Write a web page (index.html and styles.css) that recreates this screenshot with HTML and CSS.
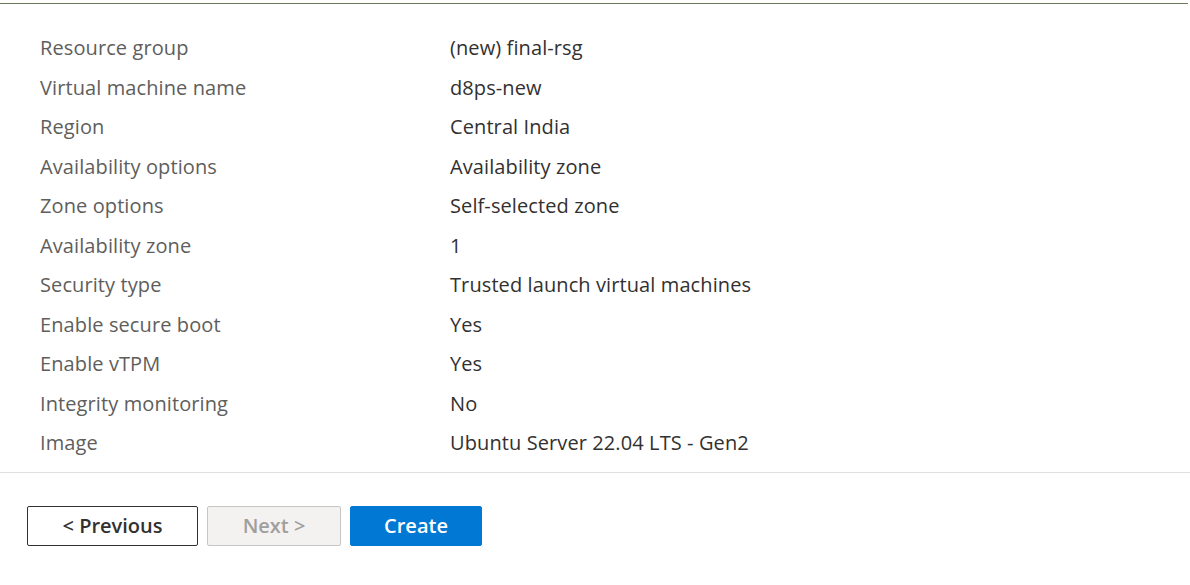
FILE: index.html
```html
<!DOCTYPE html>
<html>
<head>
<meta charset="utf-8">
<link rel="stylesheet" href="styles.css">
</head>
<body>
<div class="page">
  <div class="topline"></div>
  <div class="summary">
    <div class="label">Resource group</div><div class="value">(new) final-rsg</div>
    <div class="label">Virtual machine name</div><div class="value">d8ps-new</div>
    <div class="label">Region</div><div class="value">Central India</div>
    <div class="label">Availability options</div><div class="value">Availability zone</div>
    <div class="label">Zone options</div><div class="value">Self-selected zone</div>
    <div class="label">Availability zone</div><div class="value">1</div>
    <div class="label">Security type</div><div class="value">Trusted launch virtual machines</div>
    <div class="label">Enable secure boot</div><div class="value">Yes</div>
    <div class="label">Enable vTPM</div><div class="value">Yes</div>
    <div class="label">Integrity monitoring</div><div class="value">No</div>
    <div class="label">Image</div><div class="value">Ubuntu Server 22.04 LTS - Gen2</div>
  </div>
  <div class="footer">
    <button class="btn btn-prev">&lt; Previous</button>
    <button class="btn btn-next" disabled>Next &gt;</button>
    <button class="btn btn-create">Create</button>
  </div>
</div>
</body>
</html>
```
FILE: styles.css
```css
html, body {
  margin: 0;
  padding: 0;
  background: #ffffff;
}
body {
  font-family: "Open Sans", "Noto Sans", "Liberation Sans", sans-serif;
  width: 1190px;
  height: 585px;
  overflow: hidden;
}
.page {
  padding-top: 3px;
}
.topline {
  height: 1px;
  background: #6b7a5d;
  margin-right: 2px;
}
.summary {
  display: grid;
  grid-template-columns: 410px 1fr;
  padding: 24px 0 9px 40px;
  border-bottom: 1px solid #e1dfdd;
  font-size: 20px;
  line-height: 39.5px;
  letter-spacing: 0.1px;
}
.label {
  color: #605e5c;
}
.value {
  color: #323130;
}
.footer {
  display: flex;
  gap: 9px;
  padding: 33px 0 0 27px;
}
.btn {
  height: 40px;
  box-sizing: border-box;
  border-radius: 2px;
  font-family: inherit;
  font-size: 20px;
  font-weight: 600;
  padding: 0;
  border: 1px solid;
}
.btn-prev {
  width: 171px;
  background: #ffffff;
  border-color: #323130;
  color: #323130;
}
.btn-next {
  width: 134px;
  background: #f3f2f1;
  border-color: #c8c6c4;
  color: #a19f9d;
}
.btn-create {
  width: 132px;
  background: #0078d4;
  border-color: #0078d4;
  color: #ffffff;
}
```
